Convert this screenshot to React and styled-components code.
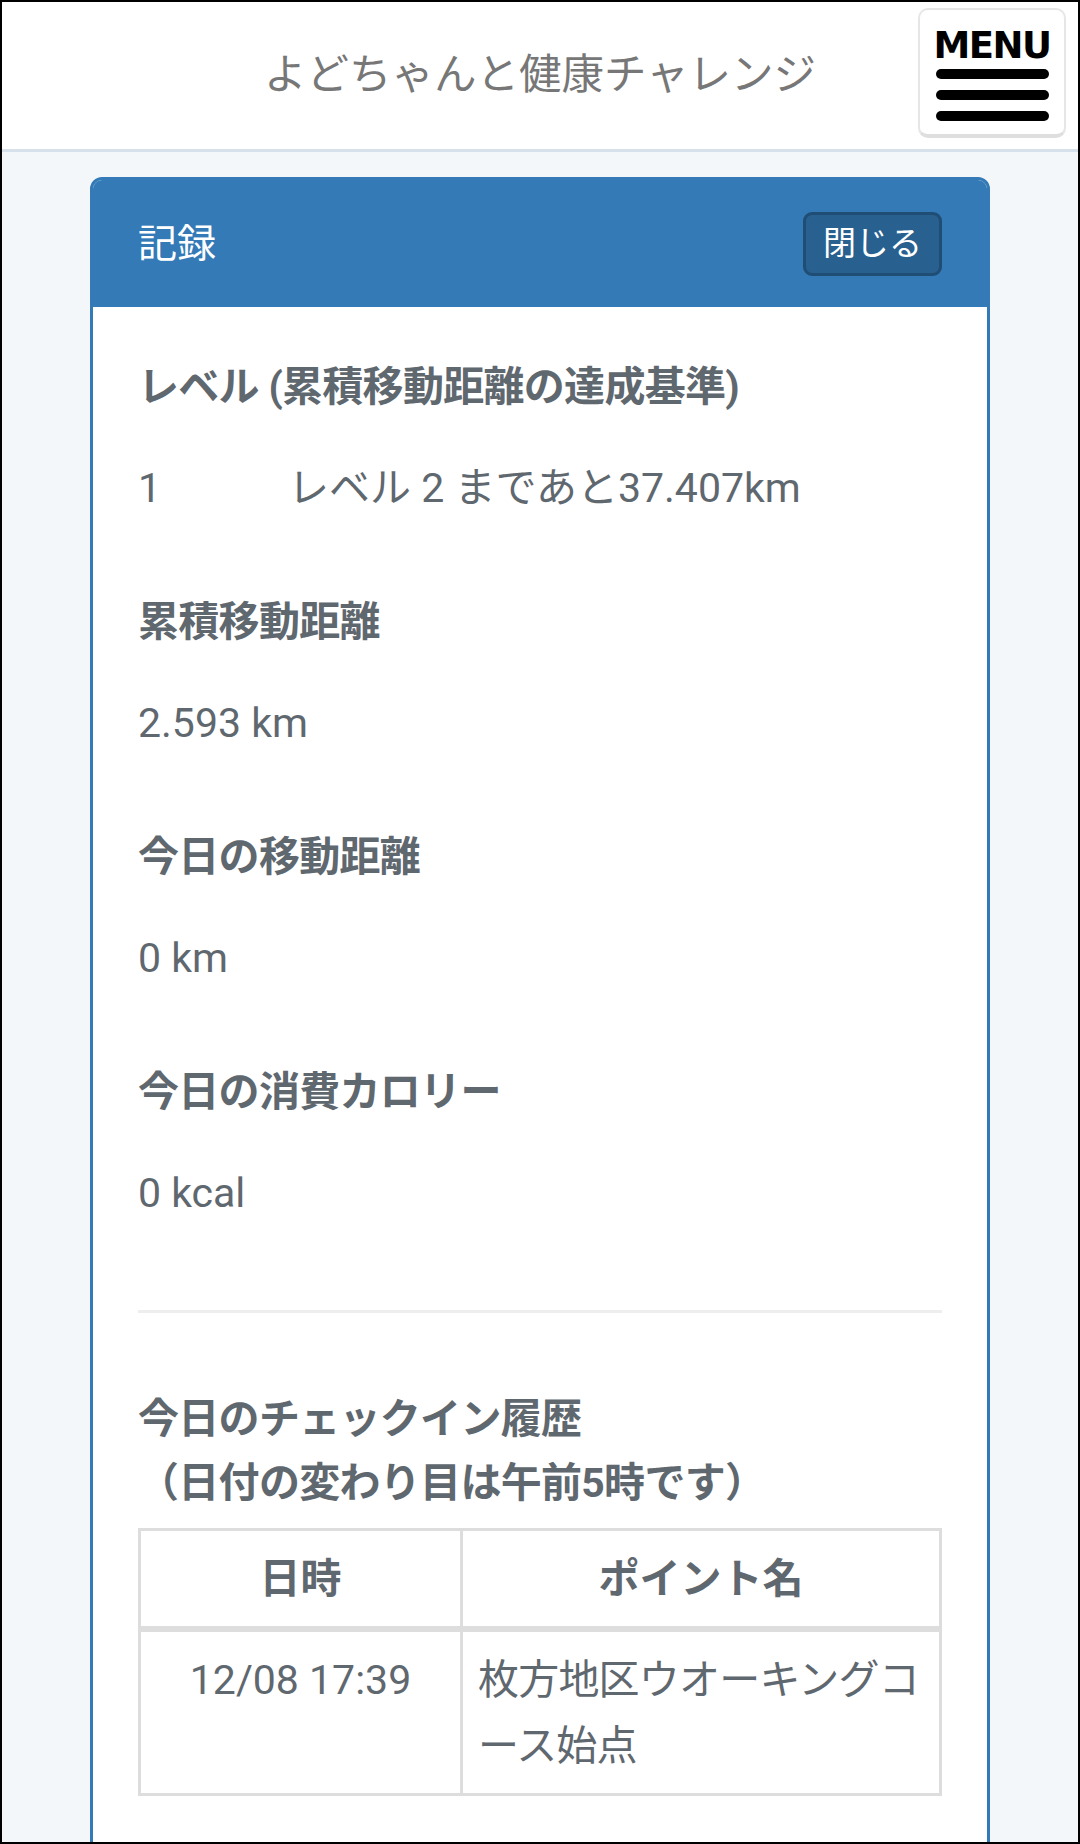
import React from "react";
import styled, { createGlobalStyle } from "styled-components";

const font = `Roboto, "Noto Sans CJK JP", "Noto Sans", sans-serif`;
const textColor = "#5f686f";

const GlobalStyle = createGlobalStyle`
  html, body { margin: 0; padding: 0; background: #fff; }
  body { font-family: ${font}; }
  * { box-sizing: border-box; }
`;

const Frame = styled.div`
  width: 1080px;
  height: 1844px;
  border: 2px solid #000;
  overflow: hidden;
  background: #f4f7fa;
`;

const Header = styled.header`
  display: grid;
  grid-template-columns: 1fr auto 1fr;
  align-items: center;
  height: 150px;
  background: #fff;
  border-bottom: 3px solid #d6e1eb;
`;

const Title = styled.h1`
  grid-column: 2;
  margin: 0 0 2px;
  font: 400 42.5px/60px ${font};
  color: #777;
  white-space: nowrap;
`;

const MenuButton = styled.button`
  grid-column: 3;
  justify-self: end;
  align-self: start;
  margin: 6px 12px 0 0;
  width: 148px;
  height: 130px;
  padding: 18px 0 0;
  background: #fff;
  border: 2px solid #e6e6e6;
  border-bottom: 4px solid #dedede;
  border-radius: 10px;
  display: flex;
  flex-direction: column;
  align-items: center;
  cursor: pointer;
`;

const MenuLabel = styled.span`
  font: 700 37px/36px "DejaVu Sans", sans-serif;
  letter-spacing: -1.5px;
  color: #000;
  margin-bottom: 5px;
`;

const MenuBar = styled.span`
  display: block;
  width: 113px;
  height: 10px;
  border-radius: 5px;
  background: #000;
  & + & {
    margin-top: 11px;
  }
`;

const Main = styled.main`
  padding: 25px 88px 0;
`;

const Panel = styled.section`
  background: #fff;
  border: 3px solid #337ab7;
  border-radius: 12px;
`;

const PanelHeading = styled.div`
  display: flex;
  justify-content: space-between;
  align-items: center;
  height: 127px;
  padding: 0 45px 0 45px;
  background: #337ab7;
  border-radius: 9px 9px 0 0;
`;

const PanelTitle = styled.h3`
  margin: 0;
  font: 400 39px/56px ${font};
  color: #fff;
`;

const CloseButton = styled.button`
  height: 64px;
  padding: 0 17px;
  font: 400 33px/58px ${font};
  color: #fff;
  background: #286090;
  border: 3px solid #204d74;
  border-radius: 9px;
  cursor: pointer;
`;

const PanelBody = styled.div`
  padding: 50px 45px 45px;
`;

const Label = styled.h4`
  margin: 0 0 41px;
  font: 700 41px/60px ${font};
  letter-spacing: -0.7px;
  color: ${textColor};
`;

const Value = styled.p`
  display: flex;
  margin: 0 0 ${(p) => (p.$last ? 0 : 74)}px;
  font: 400 41px/60px ${font};
  color: ${textColor};
`;

const LevelCell = styled.span`
  width: 150px;
  flex: none;
`;

const Divider = styled.hr`
  margin: 87px 0 74px;
  border: 0;
  border-top: 3px solid #eee;
`;

const HistoryTitle = styled.h4`
  margin: 0 0 13px;
  font: 700 41px/64px ${font};
  letter-spacing: -0.7px;
  color: ${textColor};
`;

const Table = styled.table`
  width: 100%;
  table-layout: fixed;
  border-collapse: separate;
  border-spacing: 0;
  border-top: 3px solid #ddd;
  border-left: 3px solid #ddd;
  margin-bottom: 55px;
`;

const Col = styled.col`
  width: ${(p) => p.$w};
`;

const Th = styled.th`
  padding: 15px 15px 14px;
  border-right: 3px solid #ddd;
  border-bottom: 6px solid #ddd;
  font: 700 41px/66px ${font};
  color: ${textColor};
  text-align: center;
`;

const Td = styled.td`
  padding: 15px 15px 14px;
  border-right: 3px solid #ddd;
  border-bottom: 3px solid #ddd;
  font: 400 41px/66px ${font};
  letter-spacing: ${(p) => (p.$align === "center" ? "0" : "-0.8px")};
  color: ${textColor};
  text-align: ${(p) => p.$align || "left"};
  vertical-align: top;
  white-space: nowrap;
`;

const stats = [
  { label: "累積移動距離", value: "2.593 km" },
  { label: "今日の移動距離", value: "0 km" },
  { label: "今日の消費カロリー", value: "0 kcal" },
];

export default function App() {
  return (
    <>
      <GlobalStyle />
      <Frame>
        <Header>
          <Title>よどちゃんと健康チャレンジ</Title>
          <MenuButton aria-label="MENU">
            <MenuLabel>MENU</MenuLabel>
            <MenuBar />
            <MenuBar />
            <MenuBar />
          </MenuButton>
        </Header>
        <Main>
          <Panel>
            <PanelHeading>
              <PanelTitle>記録</PanelTitle>
              <CloseButton>閉じる</CloseButton>
            </PanelHeading>
            <PanelBody>
              <Label>レベル (累積移動距離の達成基準)</Label>
              <Value>
                <LevelCell>1</LevelCell>
                <span>レベル 2 まであと37.407km</span>
              </Value>
              {stats.map((s, i) => (
                <React.Fragment key={s.label}>
                  <Label>{s.label}</Label>
                  <Value $last={i === stats.length - 1}>{s.value}</Value>
                </React.Fragment>
              ))}
              <Divider />
              <HistoryTitle>
                今日のチェックイン履歴
                <br />
                （日付の変わり目は午前5時です）
              </HistoryTitle>
              <Table>
                <colgroup>
                  <Col $w="322px" />
                  <Col $w="auto" />
                </colgroup>
                <thead>
                  <tr>
                    <Th>日時</Th>
                    <Th>ポイント名</Th>
                  </tr>
                </thead>
                <tbody>
                  <tr>
                    <Td $align="center">12/08 17:39</Td>
                    <Td>
                      枚方地区ウオーキングコ
                      <br />
                      ース始点
                    </Td>
                  </tr>
                </tbody>
              </Table>
            </PanelBody>
          </Panel>
        </Main>
      </Frame>
    </>
  );
}
